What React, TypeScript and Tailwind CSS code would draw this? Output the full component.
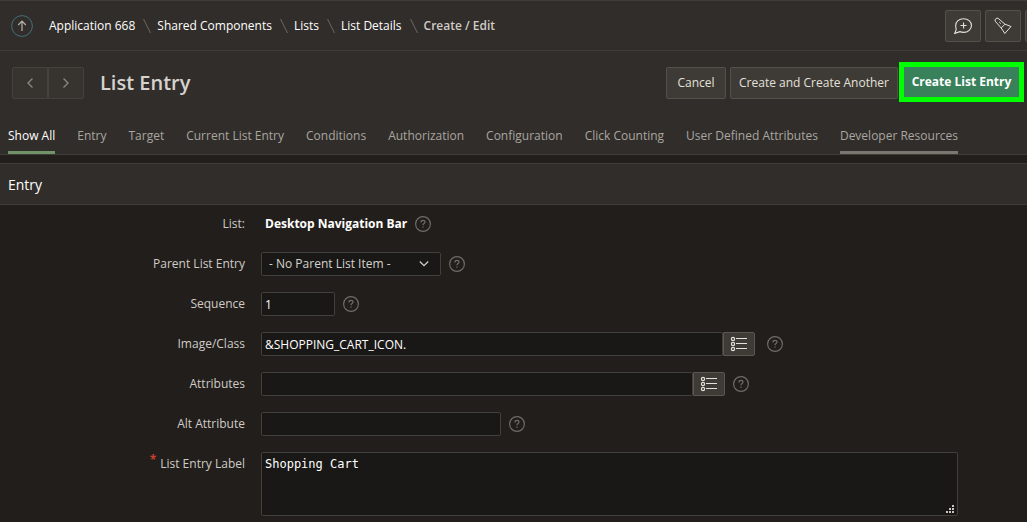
import type { ReactNode } from 'react';

const crumbs = ['Application 668', 'Shared Components', 'Lists', 'List Details'];

const tabs = [
  'Show All',
  'Entry',
  'Target',
  'Current List Entry',
  'Conditions',
  'Authorization',
  'Configuration',
  'Click Counting',
  'User Defined Attributes',
  'Developer Resources',
];

const inputClass =
  'h-6 min-w-0 rounded-xs border border-[#42403b] bg-[#191816] px-[3px] text-xs text-white outline-none';
const buttonClass =
  'flex h-8 shrink-0 items-center justify-center rounded-xs border border-[#54514b] bg-[#3e3b36] text-xs text-[#e4e1dc]';

function CrumbSlash() {
  return (
    <svg className="h-4 w-2 shrink-0" viewBox="0 0 8 16" fill="none" stroke="#6b6862" aria-hidden="true">
      <path d="M.5 1 7.5 15" />
    </svg>
  );
}

function Help({ topic }: { topic: string }) {
  return (
    <button type="button" aria-label={`Help: ${topic}`} className="shrink-0 text-[#6f6c68]">
      <svg className="size-4" viewBox="0 0 16 16" fill="none" stroke="currentColor" aria-hidden="true">
        <circle cx="8" cy="8" r="7.4" strokeWidth="1.2" />
        <path d="M6 6.4C6 4.9 6.9 4.3 8 4.3s2 .7 2 1.8c0 1.5-2 1.5-2 3.1" strokeWidth="1.2" />
        <path d="M8 10.6v1.2" strokeWidth="1.2" />
      </svg>
    </button>
  );
}

function ListButton({ label }: { label: string }) {
  return (
    <button
      type="button"
      aria-label={label}
      className="flex h-6 w-8 shrink-0 items-center justify-center rounded-r-xs border border-[#5a5751] bg-[#3e3b36] text-[#e4e1dc]"
    >
      <svg className="h-4 w-[18px]" viewBox="0 0 18 16" fill="none" stroke="currentColor" aria-hidden="true">
        <circle cx="3" cy="3" r="1.6" strokeWidth="1.2" />
        <circle cx="3" cy="8" r="1.6" strokeWidth="1.2" />
        <circle cx="3" cy="13" r="1.6" strokeWidth="1.2" />
        <path d="M6 2.5h11M6 7.5h11M6 12.5h11" />
      </svg>
    </button>
  );
}

function Field({
  label,
  htmlFor,
  required,
  children,
}: {
  label: string;
  htmlFor: string;
  required?: boolean;
  children: ReactNode;
}) {
  return (
    <div className="flex items-start gap-4">
      <div className="flex w-[245px] shrink-0 justify-end gap-1 leading-6">
        {required && <span className="text-xs leading-4 font-bold text-[#c7402f]">*</span>}
        <label htmlFor={htmlFor} className="text-[#cfccc7]">
          {label}
        </label>
      </div>
      <div className="flex min-w-0 grow items-center gap-2">{children}</div>
    </div>
  );
}

export default function App() {
  return (
    <div className="min-h-screen overflow-hidden bg-[#221e1b] font-['Open_Sans','Noto_Sans',sans-serif] text-xs text-[#cfccc7]">
      <header className="flex items-center justify-between border-y border-[#403d39] bg-[#312d2a] pt-[9px] pb-2 pl-[11px]">
        <nav aria-label="Breadcrumb" className="flex items-center">
          <a href="#up" aria-label="Up one level" className="mr-4 text-[#b5b2ad]">
            <svg className="size-[22px]" viewBox="0 0 22 22" fill="none" aria-hidden="true">
              <circle cx="11" cy="11" r="10.4" stroke="#43707d" />
              <path d="M11 16V6.5M7.2 10 11 6.2l3.8 3.8" stroke="currentColor" strokeWidth="1.2" />
            </svg>
          </a>
          <ol className="flex items-center gap-1.5 font-medium text-white">
            {crumbs.map((crumb) => (
              <li key={crumb} className="flex items-center gap-2">
                <a href="#crumb">{crumb}</a>
                <CrumbSlash />
              </li>
            ))}
            <li aria-current="page" className="font-semibold text-[#cfccc7]">
              Create / Edit
            </li>
          </ol>
        </nav>
        <div className="flex gap-1">
          <button type="button" aria-label="Add comment" className={`${buttonClass} w-9`}>
            <svg className="size-[18px]" viewBox="0 0 16 16" fill="none" stroke="currentColor" aria-hidden="true">
              <path d="M8.5 1.5c4 0 7 2.6 7 6s-3 6.2-7 6.2c-1.2 0-2.3-.3-3.3-.7L.7 14.5l1.3-3.5C1.6 10 1.5 8.8 1.5 7.7c0-3.6 3-6.2 7-6.2Z" />
              <path d="M8.5 4.8v5.4M5.8 7.5h5.4" />
            </svg>
          </button>
          <button type="button" aria-label="Spotlight search" className={`${buttonClass} w-9`}>
            <svg className="size-[18px]" viewBox="0 0 18 18" fill="none" stroke="currentColor" strokeLinejoin="round" aria-hidden="true">
              <path d="M1.2 4.2C.4 2.5 2.4.5 4.1 1.3L11 7.2 7.2 11Z" />
              <path d="M11 7.2 17 9.5 10.8 16.5 7.2 11" />
              <path d="M5.2 5 6.8 6.6" />
            </svg>
          </button>
          <button type="button" aria-label="Account" className={`${buttonClass} -mr-[34px] w-9`} />
        </div>
      </header>

      <div className="border-b border-[#403d39] bg-[#312d2a]">
        <div className="flex items-center justify-between pt-[11px] pr-[3px] pl-3">
          <div className="flex items-center gap-4 pt-0.5">
            <div className="flex text-[#8b8883]">
              <button
                type="button"
                aria-label="Previous entry"
                className="flex h-8 w-9 items-center justify-center rounded-l-xs border border-[#45423d] bg-[#37342f]"
              >
                <svg className="h-3 w-2" viewBox="0 0 8 12" fill="none" stroke="currentColor" strokeWidth="1.3" aria-hidden="true">
                  <path d="M6.5 1.5 2 6l4.5 4.5" />
                </svg>
              </button>
              <button
                type="button"
                aria-label="Next entry"
                className="flex h-8 w-9 items-center justify-center rounded-r-xs border border-[#45423d] bg-[#37342f]"
              >
                <svg className="h-3 w-2" viewBox="0 0 8 12" fill="none" stroke="currentColor" strokeWidth="1.3" aria-hidden="true">
                  <path d="M1.5 1.5 6 6l-4.5 4.5" />
                </svg>
              </button>
            </div>
            <h1 className="text-xl font-semibold text-[#d6d3ce]">List Entry</h1>
          </div>
          <div className="flex items-center">
            <div className="flex gap-1 pt-0.5 pr-px">
              <button type="button" className={`${buttonClass} w-[60px]`}>
                Cancel
              </button>
              <button type="button" className={`${buttonClass} w-[168px]`}>
                Create and Create Another
              </button>
            </div>
            <button
              type="button"
              className="h-10 w-[125px] shrink-0 border-[5px] border-[#00ff00] bg-[#38815a] text-xs font-bold text-white"
            >
              Create List Entry
            </button>
          </div>
        </div>
        <nav aria-label="Sections" className="flex gap-[22px] px-2 pt-5">
          {tabs.map((tab, i) => (
            <a
              key={tab}
              href="#section"
              className={`border-b-3 pt-1 pb-[5px] leading-5 whitespace-nowrap ${
                i === 0
                  ? 'border-[#6f9468] font-medium text-white'
                  : i === tabs.length - 1
                    ? 'border-[#7b766f] text-[#a9a6a1]'
                    : 'border-transparent text-[#a9a6a1]'
              }`}
            >
              {tab}
            </a>
          ))}
        </nav>
      </div>

      <main className="mt-2">
        <h2 className="border-y border-[#403d39] bg-[#312d2a] px-2 pt-[9px] pb-[7px] text-sm leading-6 text-white">
          Entry
        </h2>
        <form className="flex flex-col gap-4 pt-[7px]">
          <Field label="List:" htmlFor="list">
            <output id="list" className="pl-1 leading-6 font-bold text-white">
              Desktop Navigation Bar
            </output>
            <Help topic="List" />
          </Field>
          <Field label="Parent List Entry" htmlFor="parent">
            <div className="grid w-[180px] items-center">
              <select
                id="parent"
                className="col-start-1 row-start-1 h-6 appearance-none rounded-xs border border-[#42403b] bg-[#191816] px-[7px] text-xs text-[#d6d3ce] outline-none"
              >
                <option>- No Parent List Item -</option>
              </select>
              <svg
                className="pointer-events-none col-start-1 row-start-1 mr-3 h-2 w-2.5 justify-self-end"
                viewBox="0 0 10 8"
                fill="none"
                stroke="#d6d3ce"
                strokeWidth="1.2"
                aria-hidden="true"
              >
                <path d="m.8 1.5 4.2 4.2 4.2-4.2" />
              </svg>
            </div>
            <Help topic="Parent List Entry" />
          </Field>
          <Field label="Sequence" htmlFor="sequence">
            <input id="sequence" defaultValue="1" className={`${inputClass} w-[74px]`} />
            <Help topic="Sequence" />
          </Field>
          <Field label="Image/Class" htmlFor="image">
            <div className="mr-1 flex min-w-0">
              <input id="image" defaultValue="&amp;SHOPPING_CART_ICON." className={`${inputClass} w-[462px]`} />
              <ListButton label="Choose image or class" />
            </div>
            <Help topic="Image/Class" />
          </Field>
          <Field label="Attributes" htmlFor="attributes">
            <div className="flex min-w-0">
              <input id="attributes" className={`${inputClass} w-[432px]`} />
              <ListButton label="Choose attributes" />
            </div>
            <Help topic="Attributes" />
          </Field>
          <Field label="Alt Attribute" htmlFor="alt">
            <input id="alt" className={`${inputClass} w-60`} />
            <Help topic="Alt Attribute" />
          </Field>
          <Field label="List Entry Label" htmlFor="label" required>
            <div className="grid w-[697px]">
              <textarea
                id="label"
                required
                defaultValue="Shopping Cart"
                className="col-start-1 row-start-1 h-16 resize-none rounded-xs border border-[#42403b] bg-[#191816] px-[3px] py-[3px] font-['DejaVu_Sans_Mono',monospace] text-xs text-white outline-none"
              />
              <svg
                className="pointer-events-none col-start-1 row-start-1 mr-1 mb-[3px] size-2 self-end justify-self-end"
                viewBox="0 0 8 8"
                fill="#c9c6c1"
                aria-hidden="true"
              >
                <path d="M6 0h2v2H6zM3 3h2v2H3zM6 3h2v2H6zM0 6h2v2H0zM3 6h2v2H3zM6 6h2v2H6z" />
              </svg>
            </div>
          </Field>
        </form>
      </main>
    </div>
  );
}
